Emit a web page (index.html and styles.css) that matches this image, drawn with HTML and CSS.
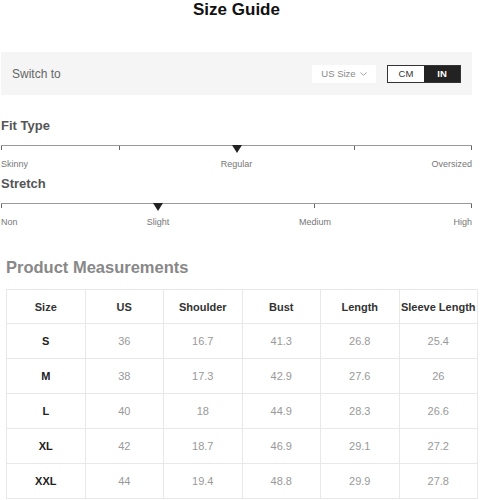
FILE: index.html
```html
<!DOCTYPE html>
<html lang="en">
<head>
<meta charset="utf-8">
<title>Size Guide</title>
<link rel="stylesheet" href="styles.css">
</head>
<body>
<div class="page">
  <h1 class="title">Size Guide</h1>

  <div class="switch-bar">
    <span class="switch-label">Switch to</span>
    <div class="switch-controls">
      <div class="size-select">US Size
        <svg class="chevron" width="7" height="4" viewBox="0 0 7 4"><path d="M0.5 0.5 L3.5 3.3 L6.5 0.5" fill="none" stroke="#999" stroke-width="0.9"/></svg>
      </div>
      <div class="unit-toggle">
        <span class="unit">CM</span>
        <span class="unit unit-active">IN</span>
      </div>
    </div>
  </div>

  <section class="scale-section">
    <h2 class="scale-title">Fit Type</h2>
    <div class="track">
      <span class="tick"></span><span class="tick"></span><span class="tick"></span><span class="tick"></span><span class="tick"></span>
      <span class="marker" style="left:50%"></span>
    </div>
    <div class="labels labels-fit">
      <span class="label label-start">Skinny</span>
      <span class="label label-mid-a">Regular</span>
      <span class="label label-end">Oversized</span>
    </div>
  </section>

  <section class="scale-section scale-stretch">
    <h2 class="scale-title">Stretch</h2>
    <div class="track">
      <span class="tick"></span><span class="tick"></span><span class="tick"></span><span class="tick"></span>
      <span class="marker" style="left:33.333%"></span>
    </div>
    <div class="labels labels-stretch">
      <span class="label label-start">Non</span>
      <span class="label label-mid-a">Slight</span>
      <span class="label label-mid-b">Medium</span>
      <span class="label label-end">High</span>
    </div>
  </section>

  <section class="measure">
    <h2 class="measure-title">Product Measurements</h2>
    <table class="measure-table">
      <thead>
        <tr><th>Size</th><th>US</th><th>Shoulder</th><th>Bust</th><th>Length</th><th>Sleeve Length</th></tr>
      </thead>
      <tbody>
        <tr><td class="size">S</td><td>36</td><td>16.7</td><td>41.3</td><td>26.8</td><td>25.4</td></tr>
        <tr><td class="size">M</td><td>38</td><td>17.3</td><td>42.9</td><td>27.6</td><td>26</td></tr>
        <tr><td class="size">L</td><td>40</td><td>18</td><td>44.9</td><td>28.3</td><td>26.6</td></tr>
        <tr><td class="size">XL</td><td>42</td><td>18.7</td><td>46.9</td><td>29.1</td><td>27.2</td></tr>
        <tr><td class="size">XXL</td><td>44</td><td>19.4</td><td>48.8</td><td>29.9</td><td>27.8</td></tr>
      </tbody>
    </table>
  </section>
</div>
</body>
</html>
```

FILE: styles.css
```css
* { box-sizing: border-box; }

html, body {
  margin: 0;
  padding: 0;
  background: #fff;
}

body {
  font-family: "Liberation Sans", Arial, sans-serif;
  color: #333;
}

.page {
  width: 471px;
  margin-left: 1px;
  display: flex;
  flex-direction: column;
}

.title {
  margin: 0;
  font-size: 17px;
  line-height: 20px;
  font-weight: 700;
  text-align: center;
  color: #111;
}

.switch-bar {
  margin-top: 32px;
  height: 43px;
  background: #f5f5f5;
  display: flex;
  align-items: center;
  justify-content: space-between;
  padding: 0 11px 0 11px;
}

.switch-label {
  font-size: 12px;
  color: #666;
}

.switch-controls {
  display: flex;
  align-items: center;
  gap: 11px;
}

.size-select {
  width: 64px;
  height: 18px;
  background: #fff;
  display: flex;
  align-items: center;
  justify-content: center;
  gap: 4px;
  font-size: 9.5px;
  color: #888;
}

.chevron { display: block; margin-top: 1px; }

.unit-toggle {
  display: flex;
  height: 18px;
  border: 1px solid #333;
}

.unit {
  width: 36px;
  display: flex;
  align-items: center;
  justify-content: center;
  font-size: 9.5px;
  color: #333;
  background: #fff;
}

.unit-active {
  background: #222;
  color: #fff;
  font-weight: 700;
}

.scale-section {
  margin-top: 23px;
  display: flex;
  flex-direction: column;
}

.scale-stretch { margin-top: 6px; }

.scale-title {
  margin: 0 0 11px 0;
  font-size: 13px;
  line-height: 16px;
  font-weight: 700;
  color: #555;
}

.track {
  position: relative;
  height: 14px;
  border-top: 1px solid #9a9a9a;
  display: flex;
  justify-content: space-between;
  align-items: flex-start;
}

.tick {
  width: 1px;
  height: 4px;
  background: #666;
}

.marker {
  position: absolute;
  top: -1px;
  width: 0;
  height: 0;
  transform: translateX(-50%);
  border-left: 5px solid transparent;
  border-right: 5px solid transparent;
  border-top: 8px solid #222;
}

.labels {
  display: grid;
  font-size: 9px;
  line-height: 11px;
  color: #777;
}

.labels-fit { grid-template-columns: repeat(4, 1fr); }
.labels-stretch { grid-template-columns: repeat(6, 1fr); }

.label-start { grid-column: 1; justify-self: start; }
.labels-fit .label-mid-a { grid-column: 2 / 4; justify-self: center; }
.labels-fit .label-end { grid-column: 4; justify-self: end; }
.labels-stretch .label-mid-a { grid-column: 2 / 4; justify-self: center; }
.labels-stretch .label-mid-b { grid-column: 4 / 6; justify-self: center; }
.labels-stretch .label-end { grid-column: 6; justify-self: end; }

.measure {
  margin-top: 29px;
  margin-left: 5px;
  display: flex;
  flex-direction: column;
}

.measure-title {
  margin: 0 0 12px 0;
  font-size: 16.5px;
  line-height: 20px;
  font-weight: 700;
  color: #888;
}

.measure-table {
  width: 472px;
  table-layout: fixed;
  border-collapse: collapse;
  font-size: 11px;
}

.measure-table th,
.measure-table td {
  border: 1px solid #e8e8e8;
  text-align: center;
  padding: 0;
}

.measure-table th {
  height: 34px;
  font-weight: 700;
  color: #333;
}

.measure-table td {
  height: 35px;
  color: #999;
}

.measure-table td.size {
  font-weight: 700;
  color: #222;
}
```
